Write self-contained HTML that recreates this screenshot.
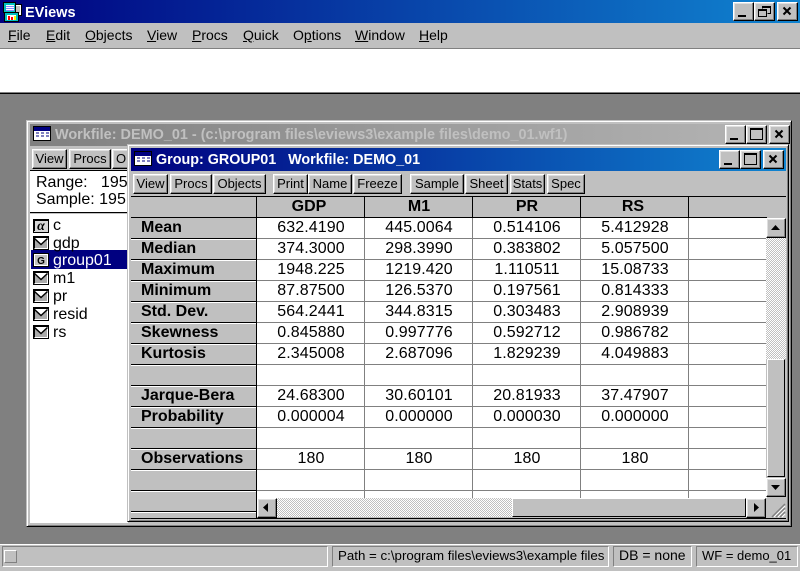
<!DOCTYPE html>
<html><head><meta charset="utf-8">
<style>
html,body{margin:0;padding:0;width:800px;height:571px;overflow:hidden;background:#c0c0c0}
body{position:relative;font-family:"Liberation Sans",Arial,sans-serif;font-size:14px;color:#000}
div,span.a,svg{position:absolute;display:block}
.t{white-space:nowrap;line-height:18px;height:18px}
.b{background:#c0c0c0;box-sizing:border-box;border:1px solid;border-color:#fff #000 #000 #fff;box-shadow:inset -1px -1px #808080,inset 1px 1px #dfdfdf;text-align:center;font-size:13px;line-height:17px;white-space:nowrap;overflow:hidden;color:#000}
.m{top:26px;font-size:14px;color:#000}
.m u{text-decoration:underline}
.lbl{left:141px;font-weight:bold;font-size:16px}
.v{width:108px;text-align:center;font-size:16px;letter-spacing:.1px}
.h{width:108px;text-align:center;font-weight:bold;font-size:16px;top:198px}
.gl{left:257px;width:510px;height:1px;background:#808080}
.bl{left:131px;width:125px;height:1px;background:#000;box-shadow:0 1px #fff}
.vl{width:1px;background:#808080;top:218px;height:280px}
.vb{width:1px;background:#000;top:197px;height:21px}
.d{background-color:#fff;background-image:repeating-conic-gradient(#c0c0c0 0 25%,#fff 0 50%);background-size:2px 2px}
.li{left:53px;font-size:16px}
.ic{left:33px;width:16px;height:14px}
.s{box-sizing:border-box;border:1px solid;border-color:#808080 #fff #fff #808080;background:#c0c0c0;top:546px;height:21px;font-size:14px;line-height:18px;white-space:nowrap}
</style></head>
<body>
<!-- main title bar -->
<div style="left:0;top:0;width:800px;height:23px;background:linear-gradient(90deg,#000080,#1084d0)"></div>
<svg style="left:3px;top:2px" width="20" height="20" viewBox="0 0 20 20">
<rect x="10.500" y="2.500" width="8" height="11" fill="#fff" stroke="#000"/><rect x="12" y="4" width="5" height="7" fill="#c0c0c0"/>
<rect x="1.500" y="10.500" width="14" height="9" fill="#00c0c0" stroke="#000"/><rect x="4" y="13" width="9" height="5" fill="#fff"/><rect x="5" y="14" width="2" height="4" fill="#f00"/><rect x="8" y="15" width="2" height="3" fill="#f00"/><rect x="11" y="14" width="2" height="4" fill="#ff0"/>
<rect x="0.500" y="0.500" width="12" height="10" fill="#00c0c0" stroke="#000"/><rect x="3" y="3" width="8" height="6" fill="#8888ff"/><path d="M3 3.500h8M3 5.500h8M3 7.500h8" stroke="#fff"/>
</svg>
<div class="t" style="left:25px;top:4px;color:#fff;font-weight:bold;font-size:14.500px">EViews</div>
<div class="b" style="left:733px;top:2px;width:21px;height:19px"></div><div style="left:738px;top:15px;width:8px;height:2px;background:#000"></div>
<div class="b" style="left:754px;top:2px;width:21px;height:19px"></div>
<svg style="left:757px;top:5px" width="16" height="14"><path d="M5.500 3.500V1.500H13.500V8.500H10.500M5 2.500H13" stroke="#000" fill="none"/><rect x="1.500" y="4.500" width="8" height="7" fill="none" stroke="#000"/><path d="M1 5.500H10" stroke="#000"/></svg>
<div class="b" style="left:777px;top:2px;width:21px;height:19px"></div>
<svg style="left:782px;top:6px" width="11" height="11"><path d="M1.500 1.500L8.500 8.500M8.500 1.500L1.500 8.500" stroke="#000" stroke-width="2" fill="none"/></svg>

<!-- menu -->
<div class="t m" style="left:8px"><u>F</u>ile</div>
<div class="t m" style="left:46px"><u>E</u>dit</div>
<div class="t m" style="left:85px"><u>O</u>bjects</div>
<div class="t m" style="left:147px"><u>V</u>iew</div>
<div class="t m" style="left:192px"><u>P</u>rocs</div>
<div class="t m" style="left:243px"><u>Q</u>uick</div>
<div class="t m" style="left:293px">O<u>p</u>tions</div>
<div class="t m" style="left:355px"><u>W</u>indow</div>
<div class="t m" style="left:419px"><u>H</u>elp</div>
<div style="left:0;top:48px;width:800px;height:1px;background:#808080"></div>
<div style="left:0;top:49px;width:800px;height:43px;background:#fff"></div>
<div style="left:0;top:92px;width:800px;height:1px;background:#808080"></div>
<div style="left:0;top:93px;width:800px;height:1px;background:#000"></div>
<div style="left:0;top:94px;width:800px;height:450px;background:#808080"></div>

<!-- workfile window -->
<div style="left:26px;top:120px;width:766px;height:407px;background:#c0c0c0;box-sizing:border-box;border:1px solid;border-color:#c0c0c0 #000 #000 #c0c0c0;box-shadow:inset 1px 1px #fff,inset -1px -1px #808080"></div>
<div style="left:30px;top:124px;width:759px;height:22px;background:linear-gradient(90deg,#808080,#b5b5b5)"></div>
<svg style="left:33px;top:126px" width="18" height="15"><rect x="0.500" y="0.500" width="17" height="14" fill="#fff" stroke="#000"/><rect x="1" y="1" width="16" height="4" fill="#000080"/><path d="M3 7h3M8 7h3M13 7h3M3 10h3M8 10h3M13 10h3" stroke="#000080"/></svg>
<div class="t" style="left:55px;top:126px;color:#c0c0c0;font-weight:bold;font-size:14.450px">Workfile: DEMO_01 - (c:\program files\eviews3\example files\demo_01.wf1)</div>
<div class="b" style="left:725px;top:125px;width:21px;height:19px"></div><div style="left:730px;top:138px;width:8px;height:2px;background:#000"></div>
<div class="b" style="left:746px;top:125px;width:21px;height:19px"></div><div style="left:750px;top:128px;width:13px;height:12px;box-sizing:border-box;border:1px solid #000;border-top-width:2px"></div>
<div class="b" style="left:769px;top:125px;width:21px;height:19px"></div>
<svg style="left:774px;top:129px" width="11" height="11"><path d="M1.500 1.500L8.500 8.500M8.500 1.500L1.500 8.500" stroke="#000" stroke-width="2" fill="none"/></svg>

<div class="b" style="left:32px;top:149px;width:35px;height:20px">View</div>
<div class="b" style="left:69px;top:149px;width:42px;height:20px">Procs</div>
<div class="b" style="left:112px;top:149px;width:30px;height:20px;text-align:left;padding-left:3px">Objects</div>
<div style="left:30px;top:170px;width:98px;height:1px;background:#000"></div>
<div style="left:30px;top:171px;width:98px;height:41px;background:#fff"></div>
<div class="t" style="left:36px;top:174px;font-size:16px">Range:&nbsp;&nbsp; 195</div>
<div class="t" style="left:36px;top:191px;font-size:16px">Sample: 195</div>
<div style="left:30px;top:212px;width:98px;height:1px;background:#000"></div>
<div style="left:30px;top:213px;width:98px;height:1px;background:#c0c0c0"></div>
<div style="left:30px;top:214px;width:98px;height:309px;background:#fff"></div>
<div style="left:31px;top:250px;width:97px;height:19px;background:#000080"></div>

<svg class="ic" style="top:219px" width="16" height="14"><rect x="0.500" y="0.500" width="15" height="13" fill="#d8d8d8" stroke="#000"/><path d="M1.500 12V1.500H15" stroke="#000" fill="none"/><text x="8" y="11" text-anchor="middle" font-family="Liberation Serif" font-weight="bold" font-style="italic" font-size="14">α</text></svg>
<svg class="ic" style="top:236px" width="16" height="14"><rect x="0.500" y="0.500" width="15" height="13" fill="#fff" stroke="#000"/><path d="M1.500 12.500V1.500H15" stroke="#000" fill="none"/><path d="M2 3.500L8 8.500L14 3.500V12H2Z" fill="#aaa"/><path d="M1.500 2.500L8 8.500L14.500 2.500" stroke="#000" stroke-width="1.500" fill="none"/></svg>
<svg class="ic" style="top:253px" width="16" height="14"><rect x="0.500" y="0.500" width="15" height="13" fill="#fff" stroke="#000"/><rect x="2" y="2" width="12" height="10" fill="#c0c0c0"/><text x="8" y="11" text-anchor="middle" font-family="Liberation Sans" font-weight="bold" font-size="10">G</text></svg>
<svg class="ic" style="top:271px" width="16" height="14"><rect x="0.500" y="0.500" width="15" height="13" fill="#fff" stroke="#000"/><path d="M1.500 12.500V1.500H15" stroke="#000" fill="none"/><path d="M2 3.500L8 8.500L14 3.500V12H2Z" fill="#aaa"/><path d="M1.500 2.500L8 8.500L14.500 2.500" stroke="#000" stroke-width="1.500" fill="none"/></svg>
<svg class="ic" style="top:289px" width="16" height="14"><rect x="0.500" y="0.500" width="15" height="13" fill="#fff" stroke="#000"/><path d="M1.500 12.500V1.500H15" stroke="#000" fill="none"/><path d="M2 3.500L8 8.500L14 3.500V12H2Z" fill="#aaa"/><path d="M1.500 2.500L8 8.500L14.500 2.500" stroke="#000" stroke-width="1.500" fill="none"/></svg>
<svg class="ic" style="top:307px" width="16" height="14"><rect x="0.500" y="0.500" width="15" height="13" fill="#fff" stroke="#000"/><path d="M1.500 12.500V1.500H15" stroke="#000" fill="none"/><path d="M2 3.500L8 8.500L14 3.500V12H2Z" fill="#aaa"/><path d="M1.500 2.500L8 8.500L14.500 2.500" stroke="#000" stroke-width="1.500" fill="none"/></svg>
<svg class="ic" style="top:325px" width="16" height="14"><rect x="0.500" y="0.500" width="15" height="13" fill="#fff" stroke="#000"/><path d="M1.500 12.500V1.500H15" stroke="#000" fill="none"/><path d="M2 3.500L8 8.500L14 3.500V12H2Z" fill="#aaa"/><path d="M1.500 2.500L8 8.500L14.500 2.500" stroke="#000" stroke-width="1.500" fill="none"/></svg>
<div class="t li" style="top:217px">c</div>
<div class="t li" style="top:235px">gdp</div>
<div class="t li" style="top:252px;color:#fff">group01</div>
<div class="t li" style="top:270px">m1</div>
<div class="t li" style="top:288px">pr</div>
<div class="t li" style="top:306px">resid</div>
<div class="t li" style="top:324px">rs</div>

<!-- group window -->
<div style="left:127px;top:144px;width:662px;height:378px;background:#c0c0c0;box-sizing:border-box;border:1px solid;border-color:#c0c0c0 #000 #000 #c0c0c0;box-shadow:inset 1px 1px #fff,inset -1px -1px #808080"></div>
<div style="left:131px;top:148px;width:655px;height:23px;background:linear-gradient(90deg,#000080,#1084d0)"></div>
<svg style="left:134px;top:151px" width="18" height="15"><rect x="0.500" y="0.500" width="17" height="14" fill="#fff" stroke="#000"/><rect x="1" y="1" width="16" height="4" fill="#000080"/><path d="M3 7h3M8 7h3M13 7h3M3 10h3M8 10h3M13 10h3" stroke="#000080"/></svg>
<div class="t" style="left:156px;top:151px;color:#fff;font-weight:bold;font-size:14.340px;white-space:pre">Group: GROUP01   Workfile: DEMO_01</div>
<div class="b" style="left:719px;top:150px;width:21px;height:19px"></div><div style="left:724px;top:163px;width:8px;height:2px;background:#000"></div>
<div class="b" style="left:740px;top:150px;width:21px;height:19px"></div><div style="left:744px;top:153px;width:13px;height:12px;box-sizing:border-box;border:1px solid #000;border-top-width:2px"></div>
<div class="b" style="left:763px;top:150px;width:21px;height:19px"></div>
<svg style="left:768px;top:154px" width="11" height="11"><path d="M1.500 1.500L8.500 8.500M8.500 1.500L1.500 8.500" stroke="#000" stroke-width="2" fill="none"/></svg>

<div class="b" style="left:133px;top:174px;width:35px;height:20px">View</div>
<div class="b" style="left:170px;top:174px;width:42px;height:20px">Procs</div>
<div class="b" style="left:213px;top:174px;width:53px;height:20px">Objects</div>
<div class="b" style="left:273px;top:174px;width:35px;height:20px">Print</div>
<div class="b" style="left:308px;top:174px;width:44px;height:20px">Name</div>
<div class="b" style="left:353px;top:174px;width:49px;height:20px">Freeze</div>
<div class="b" style="left:410px;top:174px;width:54px;height:20px">Sample</div>
<div class="b" style="left:465px;top:174px;width:43px;height:20px">Sheet</div>
<div class="b" style="left:510px;top:174px;width:35px;height:20px">Stats</div>
<div class="b" style="left:547px;top:174px;width:38px;height:20px">Spec</div>

<!-- grid -->
<div style="left:131px;top:196px;width:655px;height:1px;background:#000"></div>
<div style="left:257px;top:218px;width:510px;height:280px;background:#fff"></div>
<div style="left:257px;top:217px;width:510px;height:1px;background:#000"></div>
<div style="left:131px;top:217px;width:126px;height:1px;background:#000"></div>
<div class="vb" style="left:256px;height:321px"></div>
<div class="vb" style="left:364px"></div><div class="vb" style="left:472px"></div><div class="vb" style="left:580px"></div><div class="vb" style="left:688px"></div>
<div class="vl" style="left:364px"></div><div class="vl" style="left:472px"></div><div class="vl" style="left:580px"></div><div class="vl" style="left:688px"></div>
<div class="gl" style="top:238px"></div><div class="gl" style="top:259px"></div><div class="gl" style="top:280px"></div><div class="gl" style="top:301px"></div><div class="gl" style="top:322px"></div><div class="gl" style="top:343px"></div><div class="gl" style="top:364px"></div><div class="gl" style="top:385px"></div><div class="gl" style="top:406px"></div><div class="gl" style="top:427px"></div><div class="gl" style="top:448px"></div><div class="gl" style="top:469px"></div><div class="gl" style="top:490px"></div>
<div class="bl" style="top:238px"></div><div class="bl" style="top:259px"></div><div class="bl" style="top:280px"></div><div class="bl" style="top:301px"></div><div class="bl" style="top:322px"></div><div class="bl" style="top:343px"></div><div class="bl" style="top:364px"></div><div class="bl" style="top:385px"></div><div class="bl" style="top:406px"></div><div class="bl" style="top:427px"></div><div class="bl" style="top:448px"></div><div class="bl" style="top:469px"></div><div class="bl" style="top:490px"></div><div class="bl" style="top:511px"></div>

<div class="t h" style="left:255px">GDP</div><div class="t h" style="left:365px">M1</div><div class="t h" style="left:473px">PR</div><div class="t h" style="left:579px">RS</div>

<div class="t lbl" style="top:219px">Mean</div>
<div class="t v" style="left:257px;top:219px">632.4190</div><div class="t v" style="left:365px;top:219px">445.0064</div><div class="t v" style="left:473px;top:219px">0.514106</div><div class="t v" style="left:581px;top:219px">5.412928</div>
<div class="t lbl" style="top:240px">Median</div>
<div class="t v" style="left:257px;top:240px">374.3000</div><div class="t v" style="left:365px;top:240px">298.3990</div><div class="t v" style="left:473px;top:240px">0.383802</div><div class="t v" style="left:581px;top:240px">5.057500</div>
<div class="t lbl" style="top:261px">Maximum</div>
<div class="t v" style="left:257px;top:261px">1948.225</div><div class="t v" style="left:365px;top:261px">1219.420</div><div class="t v" style="left:473px;top:261px">1.110511</div><div class="t v" style="left:581px;top:261px">15.08733</div>
<div class="t lbl" style="top:282px">Minimum</div>
<div class="t v" style="left:257px;top:282px">87.87500</div><div class="t v" style="left:365px;top:282px">126.5370</div><div class="t v" style="left:473px;top:282px">0.197561</div><div class="t v" style="left:581px;top:282px">0.814333</div>
<div class="t lbl" style="top:303px">Std. Dev.</div>
<div class="t v" style="left:257px;top:303px">564.2441</div><div class="t v" style="left:365px;top:303px">344.8315</div><div class="t v" style="left:473px;top:303px">0.303483</div><div class="t v" style="left:581px;top:303px">2.908939</div>
<div class="t lbl" style="top:324px">Skewness</div>
<div class="t v" style="left:257px;top:324px">0.845880</div><div class="t v" style="left:365px;top:324px">0.997776</div><div class="t v" style="left:473px;top:324px">0.592712</div><div class="t v" style="left:581px;top:324px">0.986782</div>
<div class="t lbl" style="top:345px">Kurtosis</div>
<div class="t v" style="left:257px;top:345px">2.345008</div><div class="t v" style="left:365px;top:345px">2.687096</div><div class="t v" style="left:473px;top:345px">1.829239</div><div class="t v" style="left:581px;top:345px">4.049883</div>
<div class="t lbl" style="top:387px">Jarque-Bera</div>
<div class="t v" style="left:257px;top:387px">24.68300</div><div class="t v" style="left:365px;top:387px">30.60101</div><div class="t v" style="left:473px;top:387px">20.81933</div><div class="t v" style="left:581px;top:387px">37.47907</div>
<div class="t lbl" style="top:408px">Probability</div>
<div class="t v" style="left:257px;top:408px">0.000004</div><div class="t v" style="left:365px;top:408px">0.000000</div><div class="t v" style="left:473px;top:408px">0.000030</div><div class="t v" style="left:581px;top:408px">0.000000</div>
<div class="t lbl" style="top:450px">Observations</div>
<div class="t v" style="left:257px;top:450px">180</div><div class="t v" style="left:365px;top:450px">180</div><div class="t v" style="left:473px;top:450px">180</div><div class="t v" style="left:581px;top:450px">180</div>

<!-- vertical scrollbar -->
<div class="d" style="left:766px;top:238px;width:20px;height:121px"></div>
<div style="left:766px;top:359px;width:20px;height:119px;background:#c0c0c0"></div>
<div style="left:767px;top:359px;width:18px;height:118px;box-sizing:border-box;border:1px solid;border-color:#fff #000 #000 #fff"></div>
<div class="b" style="left:766px;top:218px;width:20px;height:20px"></div>
<svg style="left:771px;top:225px" width="10" height="6"><path d="M4.500 0L9 5H0Z" fill="#000"/></svg>
<div class="b" style="left:766px;top:478px;width:20px;height:19px"></div>
<svg style="left:771px;top:485px" width="10" height="6"><path d="M0 0H9L4.500 5Z" fill="#000"/></svg>

<!-- horizontal scrollbar -->
<div class="d" style="left:257px;top:498px;width:255px;height:19px"></div>
<div style="left:512px;top:498px;width:234px;height:19px;background:#c0c0c0;box-sizing:border-box;border:1px solid;border-color:#fff #000 #000 #fff"></div>
<div class="b" style="left:257px;top:498px;width:20px;height:20px"></div>
<svg style="left:263px;top:503px" width="6" height="10"><path d="M5 0V9L0 4.500Z" fill="#000"/></svg>
<div class="b" style="left:746px;top:498px;width:20px;height:20px"></div>
<svg style="left:754px;top:503px" width="6" height="10"><path d="M0 0V9L5 4.500Z" fill="#000"/></svg>
<div style="left:131px;top:518px;width:655px;height:1px;background:#000"></div>
<svg style="left:771px;top:503px" width="15" height="15"><path d="M14 1L1 14M14 5L5 14M14 9L9 14" stroke="#808080" stroke-width="1.500"/><path d="M14 3L3 14M14 7L7 14M14 11L11 14" stroke="#fff"/></svg>

<!-- status bar -->
<div style="left:0;top:544px;width:800px;height:1px;background:#fff"></div>
<div style="left:0;top:545px;width:800px;height:26px;background:#c0c0c0"></div>
<div class="s" style="left:2px;width:326px"></div>
<div style="left:4px;top:550px;width:13px;height:13px;box-sizing:border-box;border:1px solid;border-color:#fff #808080 #808080 #fff"></div>
<div class="s" style="left:332px;width:277px;padding-left:5px;font-size:13.300px">Path = c:\program files\eviews3\example files</div>
<div class="s" style="left:613px;width:79px;padding-left:5px;line-height:17px">DB = none</div>
<div class="s" style="left:696px;width:102px;padding-left:5px;font-size:13px">WF = demo_01</div>
</body></html>
